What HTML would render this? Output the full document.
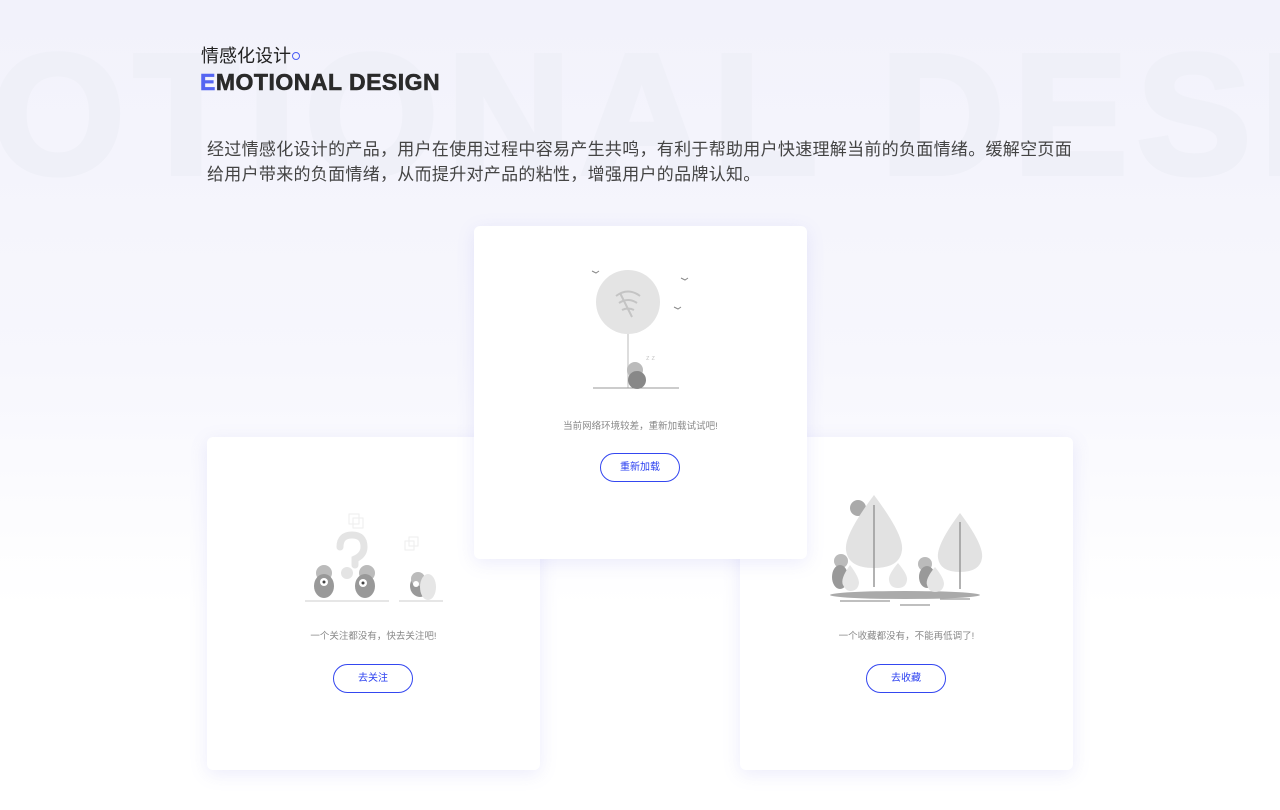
<!DOCTYPE html>
<html><head><meta charset="utf-8"><style>
body{margin:0;width:1280px;height:810px;overflow:hidden;background:linear-gradient(#f2f2fb 0%,#f7f7fd 45%,#fff 75%);font-family:"Liberation Sans","Noto Sans CJK SC",sans-serif;position:relative}
.wm{position:absolute;left:-8px;top:30px;font-size:170px;font-weight:bold;color:#eff0f8;letter-spacing:10px;white-space:nowrap;line-height:1;-webkit-text-stroke:6px #eff0f8}
.t1{position:absolute;left:201px;top:42px;font-size:18px;color:#222}
.t1 i{display:inline-block;width:6px;height:6px;border:1.5px solid #4a5cf5;border-radius:50%;vertical-align:2px;margin-left:1px}
.t2{position:absolute;left:200px;top:69px;font-size:23px;font-weight:900;color:#2a2a2a;letter-spacing:0.5px;-webkit-text-stroke:0.6px #2a2a2a}
.t2 b{color:#5465f2;-webkit-text-stroke:0.6px #5465f2}
.desc{position:absolute;left:207px;top:137px;width:880px;font-size:17px;letter-spacing:0.3px;line-height:25px;color:#444}
.card{position:absolute;width:333px;height:333px;background:#fff;border-radius:6px;box-shadow:0 4px 18px rgba(120,120,230,.14)}
.msg{position:absolute;width:100%;text-align:center;font-size:9.5px;color:#888}
.btn{position:absolute;left:126px;width:78px;height:27px;border:1px solid #3447f0;border-radius:15px;color:#2a3ff0;font-size:10px;text-align:center;line-height:27px}
</style></head><body>
<div class="wm">OTIONAL DESI</div>
<div class="t1">情感化设计<i></i></div>
<div class="t2"><b>E</b>MOTIONAL DESIGN</div>
<div class="desc">经过情感化设计的产品，用户在使用过程中容易产生共鸣，有利于帮助用户快速理解当前的负面情绪。缓解空页面给用户带来的负面情绪，从而提升对产品的粘性，增强用户的品牌认知。</div>

<div class="card" style="left:207px;top:437px">
<svg style="position:absolute;left:0;top:0" width="333" height="180">
<rect x="142" y="77" width="10" height="10" fill="none" stroke="#eee"/><rect x="146" y="81" width="10" height="10" fill="none" stroke="#eee"/>
<rect x="198" y="104" width="9" height="9" fill="none" stroke="#eee"/><rect x="202" y="100" width="9" height="9" fill="none" stroke="#eee"/>
<path d="M133 110 q0-12 12-12 q12 0 12 12 q0 8-9 12 l0 6" fill="none" stroke="#e4e4e4" stroke-width="7" stroke-linecap="round"/>
<circle cx="140" cy="136" r="6" fill="#e4e4e4"/>
<line x1="98" y1="164" x2="182" y2="164" stroke="#ccc"/><line x1="192" y1="164" x2="236" y2="164" stroke="#ccc"/>
<circle cx="117" cy="136" r="8" fill="#bbb"/><ellipse cx="117" cy="149" rx="10" ry="12" fill="#999"/><circle cx="117" cy="145" r="4" fill="#fff"/><circle cx="117" cy="145" r="1.5" fill="#444"/>
<circle cx="160" cy="136" r="8" fill="#bbb"/><ellipse cx="158" cy="149" rx="10" ry="12" fill="#999"/><circle cx="156" cy="146" r="4" fill="#fff"/><circle cx="156" cy="146" r="1.5" fill="#444"/>
<ellipse cx="213" cy="149" rx="10" ry="11" fill="#999"/><circle cx="211" cy="142" r="7" fill="#bbb"/><ellipse cx="221" cy="150" rx="8" ry="13" fill="#e6e6e6"/><circle cx="209" cy="147" r="3" fill="#fff"/>
</svg>
<div class="msg" style="top:191px">一个关注都没有，快去关注吧!</div>
<div class="btn" style="top:227px">去关注</div>
</div>

<div class="card" style="left:740px;top:437px">
<svg style="position:absolute;left:0;top:0" width="333" height="180">
<circle cx="118" cy="71" r="8" fill="#aaa"/>
<path d="M134 58 q-30 40-28 55 q2 18 28 18 q26 0 28-18 q2-15-28-55z" fill="#e2e2e2"/><line x1="134" y1="68" x2="134" y2="150" stroke="#999" stroke-width="1.5"/>
<path d="M220 76 q-24 32-22 45 q2 14 22 14 q20 0 22-14 q2-13-22-45z" fill="#e2e2e2"/><line x1="220" y1="85" x2="220" y2="152" stroke="#999" stroke-width="1.5"/>
<path d="M158 126 q-10 12-9 17 q1 8 9 8 q8 0 9-8 q1-5-9-17z" fill="#e6e6e6"/>
<ellipse cx="165" cy="158" rx="75" ry="4" fill="#aaa"/>
<line x1="100" y1="164" x2="150" y2="164" stroke="#aaa" stroke-width="1.5"/><line x1="160" y1="168" x2="190" y2="168" stroke="#aaa" stroke-width="1.5"/><line x1="200" y1="162" x2="230" y2="162" stroke="#aaa" stroke-width="1.5"/>
<circle cx="101" cy="124" r="7" fill="#bbb"/><ellipse cx="100" cy="140" rx="8" ry="12" fill="#999"/><path d="M110 128 q-10 14-7 20 q3 6 7 6 q8 0 9-8 q0-6-9-18z" fill="#e6e6e6"/>
<circle cx="185" cy="127" r="7" fill="#bbb"/><ellipse cx="187" cy="140" rx="8" ry="11" fill="#999"/><path d="M195 130 q-10 12-8 18 q2 7 8 7 q8 0 9-8 q0-6-9-17z" fill="#e6e6e6"/>
</svg>
<div class="msg" style="top:191px">一个收藏都没有，不能再低调了!</div>
<div class="btn" style="top:227px">去收藏</div>
</div>

<div class="card" style="left:474px;top:226px">
<svg style="position:absolute;left:0;top:0" width="333" height="180">
<circle cx="154" cy="76" r="32" fill="#e4e4e4"/>
<path d="M142 70 q12-9 24 0 M145 77 q9-6 18 0 M148 84 q6-3 12 0 M146 67 l12 24" fill="none" stroke="#c4c4c4" stroke-width="2"/>
<line x1="154" y1="108" x2="154" y2="162" stroke="#ddd" stroke-width="2"/>
<line x1="119" y1="162" x2="205" y2="162" stroke="#999"/>
<circle cx="161" cy="144" r="8" fill="#bbb"/><ellipse cx="163" cy="154" rx="9" ry="9" fill="#888"/>
<text x="172" y="134" font-size="7" fill="#ccc">z z</text>
<path d="M118 45 l4 2 l3-2 M207 52 l4 2 l3-2 M200 81 l4 2 l3-2" stroke="#888" fill="none"/>
</svg>
<div class="msg" style="top:192px">当前网络环境较差，重新加载试试吧!</div>
<div class="btn" style="top:227px">重新加载</div>
</div>
</body></html>
